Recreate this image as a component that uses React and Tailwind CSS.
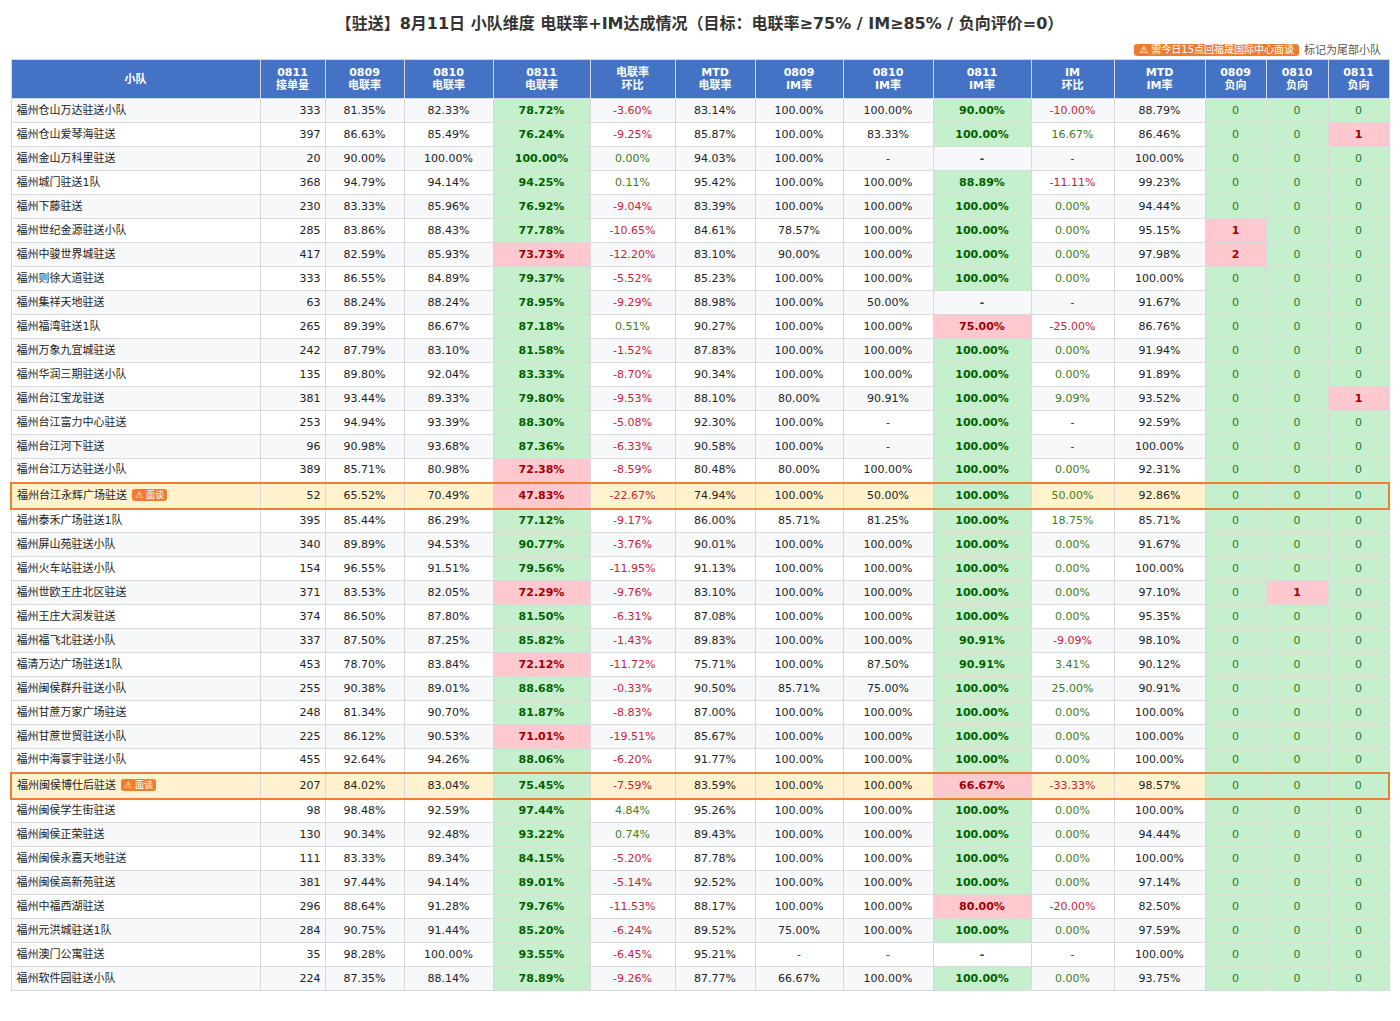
import React from 'react';

// 列宽与表头
const columns = [
  { w: 'w-[249px]', label: ['小队'] },
  { w: 'w-[65px]', label: ['0811', '接单量'] },
  { w: 'w-[79px]', label: ['0809', '电联率'] },
  { w: 'w-[89px]', label: ['0810', '电联率'] },
  { w: 'w-[97px]', label: ['0811', '电联率'] },
  { w: 'w-[85px]', label: ['电联率', '环比'] },
  { w: 'w-[80px]', label: ['MTD', '电联率'] },
  { w: 'w-[88px]', label: ['0809', 'IM率'] },
  { w: 'w-[90px]', label: ['0810', 'IM率'] },
  { w: 'w-[98px]', label: ['0811', 'IM率'] },
  { w: 'w-[83px]', label: ['IM', '环比'] },
  { w: 'w-[91px]', label: ['MTD', 'IM率'] },
  { w: 'w-[61px]', label: ['0809', '负向'] },
  { w: 'w-[62px]', label: ['0810', '负向'] },
  { w: 'w-[61px]', label: ['0811', '负向'] },
];

const rows = [
  ['福州仓山万达驻送小队', '333', '81.35%', '82.33%', '78.72%', '-3.60%', '83.14%', '100.00%', '100.00%', '90.00%', '-10.00%', '88.79%', '0', '0', '0'],
  ['福州仓山爱琴海驻送', '397', '86.63%', '85.49%', '76.24%', '-9.25%', '85.87%', '100.00%', '83.33%', '100.00%', '16.67%', '86.46%', '0', '0', '1'],
  ['福州金山万科里驻送', '20', '90.00%', '100.00%', '100.00%', '0.00%', '94.03%', '100.00%', '-', '-', '-', '100.00%', '0', '0', '0'],
  ['福州城门驻送1队', '368', '94.79%', '94.14%', '94.25%', '0.11%', '95.42%', '100.00%', '100.00%', '88.89%', '-11.11%', '99.23%', '0', '0', '0'],
  ['福州下藤驻送', '230', '83.33%', '85.96%', '76.92%', '-9.04%', '83.39%', '100.00%', '100.00%', '100.00%', '0.00%', '94.44%', '0', '0', '0'],
  ['福州世纪金源驻送小队', '285', '83.86%', '88.43%', '77.78%', '-10.65%', '84.61%', '78.57%', '100.00%', '100.00%', '0.00%', '95.15%', '1', '0', '0'],
  ['福州中骏世界城驻送', '417', '82.59%', '85.93%', '73.73%', '-12.20%', '83.10%', '90.00%', '100.00%', '100.00%', '0.00%', '97.98%', '2', '0', '0'],
  ['福州则徐大道驻送', '333', '86.55%', '84.89%', '79.37%', '-5.52%', '85.23%', '100.00%', '100.00%', '100.00%', '0.00%', '100.00%', '0', '0', '0'],
  ['福州集祥天地驻送', '63', '88.24%', '88.24%', '78.95%', '-9.29%', '88.98%', '100.00%', '50.00%', '-', '-', '91.67%', '0', '0', '0'],
  ['福州福湾驻送1队', '265', '89.39%', '86.67%', '87.18%', '0.51%', '90.27%', '100.00%', '100.00%', '75.00%', '-25.00%', '86.76%', '0', '0', '0'],
  ['福州万象九宜城驻送', '242', '87.79%', '83.10%', '81.58%', '-1.52%', '87.83%', '100.00%', '100.00%', '100.00%', '0.00%', '91.94%', '0', '0', '0'],
  ['福州华润三期驻送小队', '135', '89.80%', '92.04%', '83.33%', '-8.70%', '90.34%', '100.00%', '100.00%', '100.00%', '0.00%', '91.89%', '0', '0', '0'],
  ['福州台江宝龙驻送', '381', '93.44%', '89.33%', '79.80%', '-9.53%', '88.10%', '80.00%', '90.91%', '100.00%', '9.09%', '93.52%', '0', '0', '1'],
  ['福州台江富力中心驻送', '253', '94.94%', '93.39%', '88.30%', '-5.08%', '92.30%', '100.00%', '-', '100.00%', '-', '92.59%', '0', '0', '0'],
  ['福州台江河下驻送', '96', '90.98%', '93.68%', '87.36%', '-6.33%', '90.58%', '100.00%', '-', '100.00%', '-', '100.00%', '0', '0', '0'],
  ['福州台江万达驻送小队', '389', '85.71%', '80.98%', '72.38%', '-8.59%', '80.48%', '80.00%', '100.00%', '100.00%', '0.00%', '92.31%', '0', '0', '0'],
  ['福州台江永辉广场驻送', '52', '65.52%', '70.49%', '47.83%', '-22.67%', '74.94%', '100.00%', '50.00%', '100.00%', '50.00%', '92.86%', '0', '0', '0', true],
  ['福州泰禾广场驻送1队', '395', '85.44%', '86.29%', '77.12%', '-9.17%', '86.00%', '85.71%', '81.25%', '100.00%', '18.75%', '85.71%', '0', '0', '0'],
  ['福州屏山苑驻送小队', '340', '89.89%', '94.53%', '90.77%', '-3.76%', '90.01%', '100.00%', '100.00%', '100.00%', '0.00%', '91.67%', '0', '0', '0'],
  ['福州火车站驻送小队', '154', '96.55%', '91.51%', '79.56%', '-11.95%', '91.13%', '100.00%', '100.00%', '100.00%', '0.00%', '100.00%', '0', '0', '0'],
  ['福州世欧王庄北区驻送', '371', '83.53%', '82.05%', '72.29%', '-9.76%', '83.10%', '100.00%', '100.00%', '100.00%', '0.00%', '97.10%', '0', '1', '0'],
  ['福州王庄大润发驻送', '374', '86.50%', '87.80%', '81.50%', '-6.31%', '87.08%', '100.00%', '100.00%', '100.00%', '0.00%', '95.35%', '0', '0', '0'],
  ['福州福飞北驻送小队', '337', '87.50%', '87.25%', '85.82%', '-1.43%', '89.83%', '100.00%', '100.00%', '90.91%', '-9.09%', '98.10%', '0', '0', '0'],
  ['福清万达广场驻送1队', '453', '78.70%', '83.84%', '72.12%', '-11.72%', '75.71%', '100.00%', '87.50%', '90.91%', '3.41%', '90.12%', '0', '0', '0'],
  ['福州闽侯群升驻送小队', '255', '90.38%', '89.01%', '88.68%', '-0.33%', '90.50%', '85.71%', '75.00%', '100.00%', '25.00%', '90.91%', '0', '0', '0'],
  ['福州甘蔗万家广场驻送', '248', '81.34%', '90.70%', '81.87%', '-8.83%', '87.00%', '100.00%', '100.00%', '100.00%', '0.00%', '100.00%', '0', '0', '0'],
  ['福州甘蔗世贸驻送小队', '225', '86.12%', '90.53%', '71.01%', '-19.51%', '85.67%', '100.00%', '100.00%', '100.00%', '0.00%', '100.00%', '0', '0', '0'],
  ['福州中海寰宇驻送小队', '455', '92.64%', '94.26%', '88.06%', '-6.20%', '91.77%', '100.00%', '100.00%', '100.00%', '0.00%', '100.00%', '0', '0', '0'],
  ['福州闽侯博仕后驻送', '207', '84.02%', '83.04%', '75.45%', '-7.59%', '83.59%', '100.00%', '100.00%', '66.67%', '-33.33%', '98.57%', '0', '0', '0', true],
  ['福州闽侯学生街驻送', '98', '98.48%', '92.59%', '97.44%', '4.84%', '95.26%', '100.00%', '100.00%', '100.00%', '0.00%', '100.00%', '0', '0', '0'],
  ['福州闽侯正荣驻送', '130', '90.34%', '92.48%', '93.22%', '0.74%', '89.43%', '100.00%', '100.00%', '100.00%', '0.00%', '94.44%', '0', '0', '0'],
  ['福州闽侯永嘉天地驻送', '111', '83.33%', '89.34%', '84.15%', '-5.20%', '87.78%', '100.00%', '100.00%', '100.00%', '0.00%', '100.00%', '0', '0', '0'],
  ['福州闽侯高新苑驻送', '381', '97.44%', '94.14%', '89.01%', '-5.14%', '92.52%', '100.00%', '100.00%', '100.00%', '0.00%', '97.14%', '0', '0', '0'],
  ['福州中福西湖驻送', '296', '88.64%', '91.28%', '79.76%', '-11.53%', '88.17%', '100.00%', '100.00%', '80.00%', '-20.00%', '82.50%', '0', '0', '0'],
  ['福州元洪城驻送1队', '284', '90.75%', '91.44%', '85.20%', '-6.24%', '89.52%', '75.00%', '100.00%', '100.00%', '0.00%', '97.59%', '0', '0', '0'],
  ['福州澳门公寓驻送', '35', '98.28%', '100.00%', '93.55%', '-6.45%', '95.21%', '-', '-', '-', '-', '100.00%', '0', '0', '0'],
  ['福州软件园驻送小队', '224', '87.35%', '88.14%', '78.89%', '-9.26%', '87.77%', '66.67%', '100.00%', '100.00%', '0.00%', '93.75%', '0', '0', '0'],
];

const base = 'border border-[#d9d9d9] px-1 text-[11px] leading-[14px] text-center';
const good = 'bg-[#c6efce] text-[#006100] font-bold';
const bad = 'bg-[#ffc7ce] text-[#9c0006] font-bold';

function cellClass(i, v) {
  if (i === 0) return 'border border-[#d9d9d9] pl-[5px] pr-1 text-[11px] leading-[14px] text-left text-[#222]';
  if (i === 1) return 'border border-[#d9d9d9] pl-1 pr-[4px] text-[11px] leading-[14px] text-right text-[#222]';
  if (v === '-') {
    return i === 9 ? `${base} text-[#333] font-bold` : `${base} text-[#333]`;
  }
  const num = parseFloat(v);
  if (i === 4) return `${base} ${num >= 75 ? good : bad}`;
  if (i === 9) return `${base} ${num >= 85 ? good : bad}`;
  if (i === 5 || i === 10) return `${base} ${num < 0 ? 'text-[#c41e3a]' : 'text-[#3f7d1c]'}`;
  if (i >= 12) return v === '0' ? `${base} bg-[#c6efce] text-[#2a7a2a]` : `${base} ${bad}`;
  return `${base} text-[#222]`;
}

function Badge() {
  return (
    <span className="ml-[5px] inline-block rounded-[3px] bg-[#ed7d31] px-[3px] align-[1px] text-[9px] leading-[12px] text-white">
      ⚠ 面谈
    </span>
  );
}

export default function App() {
  return (
    <div className="min-h-[1021px] bg-white pl-[10px] pr-[11px] font-['DejaVu_Sans','Noto_Sans_CJK_SC',sans-serif] text-[#222]">
      <div className="pt-[13px] text-center text-[16px] font-bold leading-[22px] text-[#333]">
        【驻送】8月11日 小队维度 电联率+IM达成情况（目标：电联率≥75% / IM≥85% / 负向评价=0）
      </div>

      <div className="mt-[8px] mb-[2px] flex h-[14px] items-center justify-end gap-[5px] pr-[8px]">
        <span className="rounded-[3px] bg-[#ed7d31] px-[5px] text-[10px] leading-[12px] text-white">
          ⚠ 需今日15点回福晟国际中心面谈
        </span>
        <span className="text-[11px] leading-[13px] text-[#555]">标记为尾部小队</span>
      </div>

      <table className="w-[1378px] table-fixed border-collapse">
        <colgroup>
          {columns.map((c, i) => (
            <col key={i} className={c.w} />
          ))}
        </colgroup>
        <thead>
          <tr className="h-[39px] bg-[#4472c4]">
            {columns.map((c, i) => (
              <th
                key={i}
                className="border border-[#d0d7e5] px-1 text-center text-[11px] font-bold leading-[13px] text-white"
              >
                {c.label.map((l, j) => (
                  <div key={j}>{l}</div>
                ))}
              </th>
            ))}
          </tr>
        </thead>
        <tbody>
          {rows.map((r, ri) => {
            const flagged = r[15] === true;
            const rowBg = flagged ? 'bg-[#fff2cc]' : ri % 2 === 0 ? 'bg-[#f7f8fa]' : 'bg-white';
            return (
              <tr
                key={ri}
                className={flagged ? `h-[26px] ${rowBg} border-2 border-[#ed7d31]` : `h-[24px] ${rowBg}`}
              >
                {r.slice(0, 15).map((v, i) => (
                  <td key={i} className={cellClass(i, v)}>
                    {v}
                    {i === 0 && flagged && <Badge />}
                  </td>
                ))}
              </tr>
            );
          })}
        </tbody>
      </table>
    </div>
  );
}
